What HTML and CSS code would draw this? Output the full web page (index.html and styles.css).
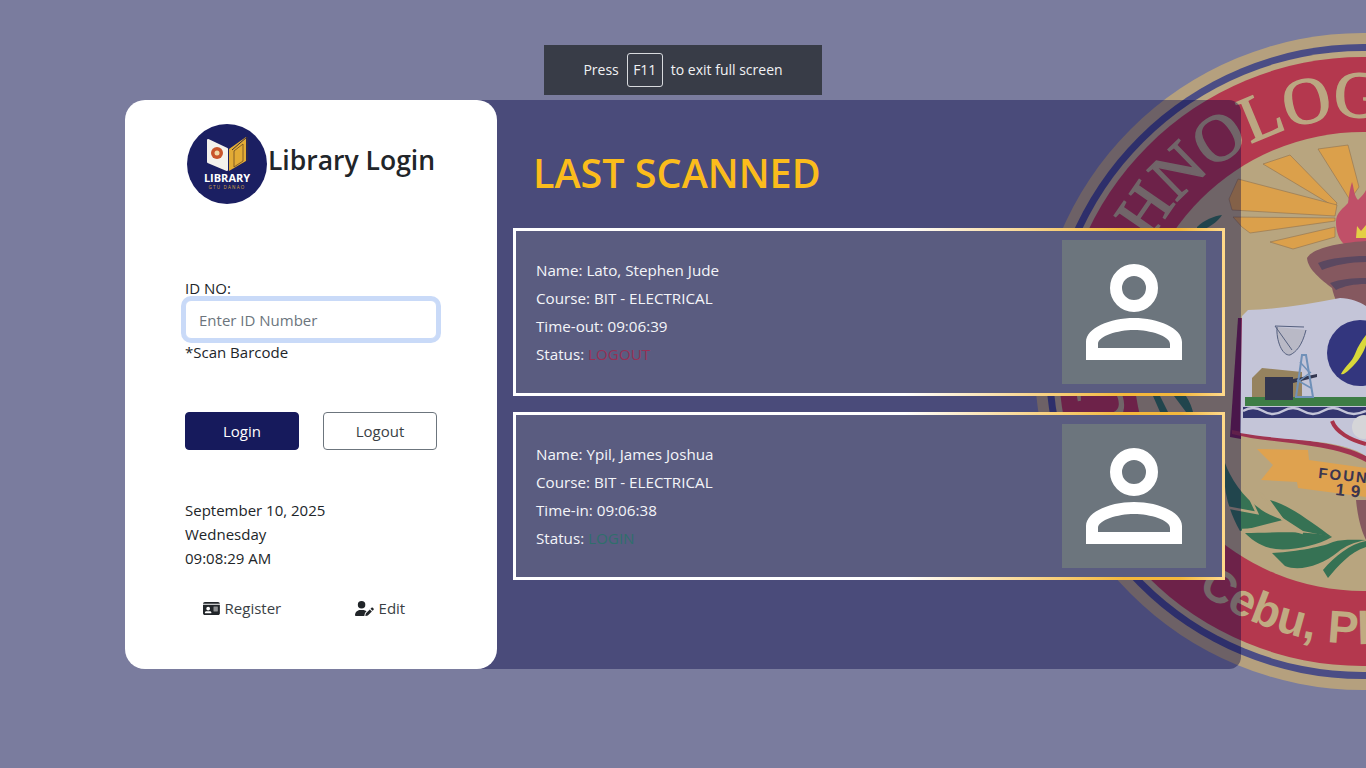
FILE: index.html
```html
<!DOCTYPE html>
<html lang="en">
<head>
    <meta charset="UTF-8">
    <meta name="viewport" content="width=device-width, initial-scale=1.0">
    <title>Library Login</title>
    <link rel="stylesheet" href="styles.css">
</head>
<body>
    <!-- school seal, sits behind everything and runs off the right edge -->
    <svg class="seal" viewBox="0 0 1366 768" aria-hidden="true">
        <defs>
            <path id="topArc" d="M1191.1 534.1 A244 244 0 1 1 1534.9 534.1"/>
            <path id="bottomArc" d="M1197.4 590.5 A283 283 0 0 0 1528.6 590.5"/>
        </defs>
        <circle cx="1363" cy="361.5" r="328.5" fill="#b5a07e"/>
        <circle cx="1363" cy="361.5" r="317.5" fill="#4b4d85"/>
        <circle cx="1363" cy="361.5" r="310.5" fill="#bba782"/>
        <circle cx="1363" cy="361.5" r="304.5" fill="#b4384e"/>
        <circle cx="1363" cy="361.5" r="229.5" fill="#b8a57f"/>
        <text class="seal-top"><textPath href="#topArc">CEBU TECHNOLOGICAL UNIVERSITY</textPath></text>
        <text class="seal-bottom"><textPath href="#bottomArc">Cebu, Philippines</textPath></text>

        <!-- sun rays -->
        <g fill="#dba04b" stroke="#8f7250" stroke-width="0.6">
            <polygon points="1318,149 1348,145 1359,187 1350,200"/>
            <polygon points="1263,164 1290,155 1337,203 1335,207"/>
            <polygon points="1238,179 1229,199 1232,210 1335,216 1337,205"/>
            <polygon points="1233,217 1335,218 1335,221 1250,233 1242,227"/>
            <polygon points="1270,242 1335,227 1335,237 1293,249"/>
        </g>

        <!-- torch -->
        <path d="M1336 222 C1336 212 1344 208 1348 203 C1349 195 1350 188 1352 182 C1354 188 1354 196 1358 200 C1362 196 1364 194 1366 190 V245 H1345 C1339 240 1336 232 1336 222 Z" fill="#c05068"/>
        <path d="M1356 238 L1357 226 L1361 231 L1366 225 V238 Z" fill="#e3cf45"/>
        <path d="M1307 258 C1312 249 1335 243 1366 241 V330 H1350 C1340 310 1334 298 1332 288 C1322 280 1308 270 1307 258 Z" fill="#85585f"/>
        <path d="M1318 263 C1330 258 1350 256 1366 256 V262 C1350 262 1334 265 1322 270 Z M1330 283 C1340 279 1354 278 1366 278 V284 C1354 284 1344 286 1336 290 Z" fill="#5b4860"/>

        <!-- book shield -->
        <path d="M1238 318 L1230 437 L1241 439 L1244 318 Z" fill="#7a2350"/>
        <path d="M1232 434 C1270 444 1330 442 1366 462 V456 C1330 438 1280 440 1232 430 Z" fill="#a03450"/>
        <path d="M1248 310 C1280 309 1310 304 1340 298 C1350 298 1360 302 1366 306 V456 C1340 438 1290 442 1240 433 L1242 316 Z" fill="#c4c5d8"/>
        <circle cx="1360" cy="353" r="33" fill="#33367e"/>
        <path d="M1341 374 C1345 366 1352 362 1355 354 C1358 346 1362 340 1366 335 V345 C1364 352 1358 362 1350 369 C1346 373 1343 375 1341 374 Z" fill="#d8d83a"/>
        <rect x="1245" y="397" width="121" height="9" fill="#3d7d45"/>
        <rect x="1243" y="407" width="123" height="11" fill="#33366f"/>
        <path d="M1243 411 Q1253 405 1263 411 T1283 411 T1303 411 T1323 411 T1343 411 T1366 411" fill="none" stroke="#c4c5d8" stroke-width="2.5"/>
        <path d="M1252 397 L1252 378 L1262 368 L1302 372 V397 Z" fill="#96835f"/>
        <rect x="1265" y="377" width="28" height="23" fill="#33364f"/>
        <path d="M1293 379 L1317 374 V377 L1293 383 Z" fill="#33364f"/>
        <path d="M1296 397 L1302 355 L1306 355 L1313 397 Z" fill="none" stroke="#6f90b8" stroke-width="2"/>
        <path d="M1297 380 L1311 388 M1311 372 L1298 382 M1300 362 L1309 372" stroke="#6f90b8" stroke-width="1.5"/>
        <path d="M1277 327 C1276 340 1282 356 1290 355 C1296 352 1302 346 1306 330" fill="#b9b9c6" stroke="#55607f"/>
        <path d="M1275 326 L1304 327 M1275 326 L1292 350" stroke="#55607f" fill="none"/>
        <path d="M1332 421 C1336 432 1350 440 1366 444" fill="none" stroke="#a8344a" stroke-width="4"/>
        <circle cx="1364" cy="427" r="12" fill="#d5d5d8"/>

        <!-- founded ribbon -->
        <polygon points="1257,449 1308,450 1309,460 1366,468 1366,497 1298,488 1297,482 1261,480 1273,465" fill="#dfa24f"/>
        <text class="seal-founded" transform="translate(1318 478) rotate(6)">FOUNDED</text>
        <text class="seal-year" transform="translate(1335 495) rotate(6)">1911</text>
        <path d="M1356 500 H1366 V540 C1362 532 1358 520 1356 500 Z" fill="#85585f"/>

        <!-- wreath -->
        <g fill="#367254">
            <path d="M1225 463 C1232 482 1250 510 1283 520 L1240 531 C1228 510 1222 486 1225 463 Z"/>
            <path d="M1270 500 C1290 505 1315 525 1332 537 L1303 531 L1283 518 Z"/>
            <path d="M1245 533 C1270 533 1310 530 1332 537 C1315 547 1285 552 1270 548 C1258 545 1250 538 1245 533 Z"/>
            <path d="M1272 553 C1290 552 1320 548 1333 542 C1343 539 1355 540 1366 540 C1355 542 1345 546 1338 552 C1322 565 1300 572 1285 566 Z"/>
            <path d="M1323 570 L1328 578 C1338 566 1350 552 1366 547 V541 C1350 544 1335 556 1323 570 Z"/>
            <path d="M1197 227 C1204 220 1214 216 1222 215 C1218 222 1208 228 1197 233 Z"/>
            <path d="M1153 396 L1160 412 H1168 L1160 396 Z M1186 396 C1190 402 1192 408 1193 412 H1186 L1174 396 Z"/>
        </g>
        <path d="M1240 477 L1257 513 L1225 507 M1260 493 L1283 520 M1242 530 L1287 528 L1303 533" fill="none" stroke="#b8a57f" stroke-width="2.5"/>
    </svg>

    <div class="fullscreen-msg">
        <span>Press</span>
        <span class="key">F11</span>
        <span>to exit full screen</span>
    </div>

    <div class="wrapper">
        <div class="login-card">
            <div class="brand">
                <svg class="logo" viewBox="0 0 80 80" role="img" aria-label="Library logo">
                    <circle cx="40" cy="40" r="40" fill="#1b1f62"/>
                    <path d="M21 16 L40 25 V46 L21 38 Z" fill="#f4f1ec" stroke="#f4f1ec" stroke-width="2" stroke-linejoin="round"/>
                    <path d="M42 25 L59 13 V37 L42 47 Z" fill="#e3ab35"/>
                    <path d="M45 26 L60 13 V37" fill="none" stroke="#3c2f3a" stroke-width="1"/>
                    <path d="M47 27 L56 20 V37 L47 43 Z" fill="none" stroke="#6b4a24" stroke-width="0.8"/>
                    <circle cx="30" cy="29" r="6" fill="#c9542b"/>
                    <circle cx="30" cy="29" r="2.5" fill="#f0d9a8"/>
                    <text class="logo-name" x="40" y="58" text-anchor="middle">LIBRARY</text>
                    <text class="logo-sub" x="40" y="65" text-anchor="middle">GTU DANAO</text>
                </svg>
                <h3>Library Login</h3>
            </div>

            <form class="login-form">
                <label for="idNumber">ID NO:</label>
                <input type="text" id="idNumber" placeholder="Enter ID Number" class="focused">
                <p class="hint">*Scan Barcode</p>

                <div class="row buttons">
                    <button type="button" class="btn btn-login">Login</button>
                    <button type="button" class="btn btn-logout">Logout</button>
                </div>
            </form>

            <div class="clock">
                <div>September 10, 2025</div>
                <div>Wednesday</div>
                <div>09:08:29 AM</div>
            </div>

            <div class="row links">
                <a href="#">
                    <svg class="icon" viewBox="0 0 576 512"><path d="M0 96l576 0c0-35.3-28.7-64-64-64H64C28.7 32 0 60.7 0 96zm0 32V416c0 35.3 28.7 64 64 64H512c35.3 0 64-28.7 64-64V128H0zM64 405.3c0-29.5 23.9-53.3 53.3-53.3H234.7c29.5 0 53.3 23.9 53.3 53.3c0 5.9-4.8 10.7-10.7 10.7H74.7c-5.9 0-10.7-4.8-10.7-10.7zM176 192a64 64 0 1 1 0 128 64 64 0 1 1 0-128zm176 16c0-8.8 7.2-16 16-16H496c8.8 0 16 7.2 16 16s-7.2 16-16 16H368c-8.8 0-16-7.2-16-16zm0 64c0-8.8 7.2-16 16-16H496c8.8 0 16 7.2 16 16s-7.2 16-16 16H368c-8.8 0-16-7.2-16-16zm0 64c0-8.8 7.2-16 16-16H496c8.8 0 16 7.2 16 16s-7.2 16-16 16H368c-8.8 0-16-7.2-16-16z"/></svg>
                    Register
                </a>
                <a href="#">
                    <svg class="icon" viewBox="0 0 640 512"><path d="M224 256A128 128 0 1 0 224 0a128 128 0 1 0 0 256zm-45.7 48C79.8 304 0 383.8 0 482.3C0 498.7 13.3 512 29.7 512H322.8c-3.1-8.8-3.7-18.4-1.4-27.8l15-60.1c2.8-11.3 8.6-21.5 16.8-29.7l40.3-40.3c-32.1-31-75.7-50.1-123.9-50.1H178.3zm435.5-68.3c-15.6-15.6-40.9-15.6-56.6 0l-29.4 29.4 71 71 29.4-29.4c15.6-15.6 15.6-40.9 0-56.6l-14.4-14.4zM375.9 417c-4.1 4.1-7 9.2-8.4 14.9l-15 60.1c-1.4 5.5 .2 11.2 4.2 15.2s9.7 5.6 15.2 4.2l60.1-15c5.6-1.4 10.8-4.3 14.9-8.4L576.1 358.7l-71-71L375.9 417z"/></svg>
                    Edit
                </a>
            </div>
        </div>

        <div class="scan-panel">
            <h1>LAST SCANNED</h1>

            <div class="scan-card">
                <div class="scan-info">
                    <div>Name: Lato, Stephen Jude</div>
                    <div>Course: BIT - ELECTRICAL</div>
                    <div>Time-out: 09:06:39</div>
                    <div>Status: <span class="status-out">LOGOUT</span></div>
                </div>
                <svg class="photo" viewBox="0 0 144 144">
                    <circle cx="72" cy="48" r="18" fill="none" stroke="#fff" stroke-width="12"/>
                    <path fill="#fff" fill-rule="evenodd" d="M24 120 V102 C24 88 48 78 72 78 C96 78 120 88 120 102 V120 Z M36 108 H108 V104 C108 96 88 90 72 90 C56 90 36 96 36 104 Z"/>
                </svg>
            </div>

            <div class="scan-card">
                <div class="scan-info">
                    <div>Name: Ypil, James Joshua</div>
                    <div>Course: BIT - ELECTRICAL</div>
                    <div>Time-in: 09:06:38</div>
                    <div>Status: <span class="status-in">LOGIN</span></div>
                </div>
                <svg class="photo" viewBox="0 0 144 144">
                    <circle cx="72" cy="48" r="18" fill="none" stroke="#fff" stroke-width="12"/>
                    <path fill="#fff" fill-rule="evenodd" d="M24 120 V102 C24 88 48 78 72 78 C96 78 120 88 120 102 V120 Z M36 108 H108 V104 C108 96 88 90 72 90 C56 90 36 96 36 104 Z"/>
                </svg>
            </div>
        </div>
    </div>
</body>
</html>
```

FILE: styles.css
```css
* {
    box-sizing: border-box;
}

body {
    margin: 0;
    height: 100vh;
    overflow: hidden;
    position: relative;
    display: flex;
    justify-content: center;
    padding-top: 100px;
    font-family: "Open Sans", "Noto Sans", sans-serif;
    font-size: 15px;
    color: #212529;
    background: #7a7c9e;
}

.seal {
    position: absolute;
    top: 0;
    left: 0;
    width: 1366px;
    height: 768px;
}

.seal-top {
    font-family: "Liberation Serif", serif;
    font-size: 66px;
    fill: #bba782;
    stroke: #bba782;
    stroke-width: 1.5px;
}

.seal-bottom {
    font-family: "Liberation Sans", sans-serif;
    font-weight: 700;
    font-size: 46px;
    fill: #c0ab82;
}

.seal-founded {
    font-family: "Liberation Sans", sans-serif;
    font-weight: 700;
    font-size: 15px;
    letter-spacing: 2px;
    fill: #3a3550;
}

.seal-year {
    font-family: "Liberation Sans", sans-serif;
    font-weight: 700;
    font-size: 17px;
    letter-spacing: 6px;
    fill: #3a3550;
}

.fullscreen-msg {
    position: absolute;
    top: 45px;
    left: 544px;
    width: 278px;
    height: 50px;
    z-index: 5;
    display: flex;
    align-items: center;
    justify-content: center;
    gap: 8px;
    font-size: 14px;
    color: #f1f2f4;
    background: #383c47;
}

.fullscreen-msg span {
    padding-bottom: 2px;
}

.fullscreen-msg .key {
    width: 36px;
    height: 34px;
    display: flex;
    align-items: center;
    justify-content: center;
    border: 1px solid #d8dade;
    border-radius: 3px;
}

.wrapper {
    position: relative;
    width: 1116px;
    height: 569px;
    display: flex;
}

.login-card {
    position: relative;
    z-index: 2;
    width: 372px;
    flex-shrink: 0;
    padding: 24px 60px 0;
    background: #ffffff;
    border-radius: 20px;
}

.brand {
    display: flex;
    align-items: center;
    justify-content: center;
    height: 80px;
}

.logo {
    width: 80px;
    height: 80px;
    flex-shrink: 0;
}

.logo-name {
    font-family: "Open Sans", sans-serif;
    font-weight: 700;
    font-size: 11px;
    fill: #ffffff;
}

.logo-sub {
    font-family: "Open Sans", sans-serif;
    font-size: 4.5px;
    letter-spacing: 1.2px;
    fill: #d9a441;
}

.brand h3 {
    margin: 0 0 8px 1px;
    font-size: 26.5px;
    font-weight: 600;
    white-space: nowrap;
}

.login-form {
    margin-top: 72px;
}

.login-form label {
    display: block;
    line-height: 24px;
}

.login-form input {
    display: block;
    width: 100%;
    height: 39px;
    padding: 6px 13px;
    font-family: inherit;
    font-size: 15px;
    color: #212529;
    background: #ffffff;
    border: 1px solid #c9daf8;
    border-radius: 6px;
    outline: none;
}

.login-form input.focused {
    box-shadow: 0 0 0 4px #c9daf8;
}

.login-form input::placeholder {
    color: #6c757d;
}

.hint {
    margin: 1px 0 0;
    line-height: 24px;
}

.row {
    display: flex;
    justify-content: space-between;
}

.buttons {
    margin-top: 48px;
}

.btn {
    width: 114px;
    height: 38px;
    font-family: inherit;
    font-size: 15px;
    border-radius: 4px;
    cursor: pointer;
}

.btn-login {
    color: #ffffff;
    background: #161a5c;
    border: 1px solid #161a5c;
}

.btn-logout {
    color: #3a3f45;
    background: #ffffff;
    border: 1px solid #6c757d;
}

.clock {
    margin-top: 48px;
    line-height: 24px;
}

.links {
    margin-top: 26px;
}

.links a {
    width: 114px;
    display: flex;
    align-items: center;
    justify-content: center;
    gap: 5px;
    line-height: 24px;
    color: #3a3f45;
    text-decoration: none;
}

.icon {
    height: 15px;
    fill: #212529;
}

.scan-panel {
    flex: 1;
    margin-left: -20px;
    padding: 46px 16px 0 36px;
    background: rgba(2, 2, 68, 0.4);
    border-radius: 0 12px 12px 0;
}

.scan-panel h1 {
    margin: 0 0 26px 20px;
    height: 56px;
    font-size: 39.5px;
    line-height: 54px;
    font-weight: 600;
    color: #fbbc1c;
}

.scan-card {
    height: 168px;
    margin-bottom: 16px;
    padding: 9px 16px 9px 20px;
    display: flex;
    align-items: center;
    justify-content: space-between;
    color: #f4f5f9;
    background: #5a5c80;
    border: 3px solid;
    border-image: linear-gradient(90deg, #ffffff 55%, #f4b83c 86%, #f4b83c 94%, #ffd98a 100%) 1;
}

.scan-info {
    line-height: 28px;
    font-size: 15.2px;
}

.status-out {
    color: #973055;
}

.status-in {
    color: #2f6f6c;
}

.photo {
    width: 144px;
    height: 144px;
    flex-shrink: 0;
    background: #6c757d;
}
```
